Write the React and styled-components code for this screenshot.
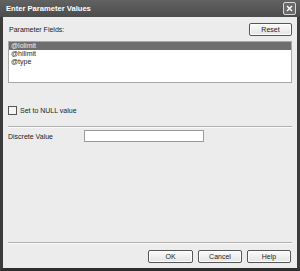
import styled, { createGlobalStyle } from "styled-components";

const Global = createGlobalStyle`
  html, body { margin: 0; padding: 0; background: #ececec; }
  body { font-family: "Liberation Sans", Arial, sans-serif; }
`;

const Window = styled.div`
  width: 300px;
  height: 271px;
  box-sizing: border-box;
  display: flex;
  flex-direction: column;
  background: #ececec;
  border-left: 3px solid #3c3c3c;
  border-right: 3px solid #3c3c3c;
  border-bottom: 3px solid #2e2e2e;
  font-size: 7px;
  color: #222;
`;

const TitleBar = styled.div`
  height: 17px;
  margin: 0 -3px;
  padding: 0 4px 0 6px;
  display: flex;
  align-items: center;
  justify-content: space-between;
  background: linear-gradient(#626262, #4c4c4c);
  color: #fff;
  font-weight: bold;
  font-size: 7.6px;
`;

const CloseBox = styled.div`
  width: 11px;
  height: 11px;
  border: 1px solid #d8d8d8;
  border-radius: 2px;
  background: #6a6a6a;
  display: flex;
  align-items: center;
  justify-content: center;
`;

const Body = styled.div`
  flex: 1;
  display: flex;
  flex-direction: column;
  padding: 6px 5px 0 5px;
`;

const HeaderRow = styled.div`
  display: flex;
  align-items: center;
  justify-content: space-between;
  padding-left: 1px;
`;

const Button = styled.button`
  width: ${(p) => p.w || 44}px;
  height: 13px;
  padding: 0;
  font: inherit;
  color: #222;
  background: linear-gradient(#fbfbfb, #e4e4e4);
  border: 1px solid #555;
  border-radius: 2px;
  box-shadow: inset 0 0 0 1px #fff;
`;

const List = styled.div`
  margin-top: 5px;
  height: 42px;
  background: #fff;
  border: 1px solid #a8a8a8;
  box-sizing: border-box;
`;

const ListItem = styled.div`
  height: 8px;
  line-height: 8px;
  padding-left: 2px;
  background: ${(p) => (p.selected ? "#6e6e6e" : "transparent")};
  color: ${(p) => (p.selected ? "#eee" : "#222")};
`;

const CheckRow = styled.label`
  margin-top: 23px;
  display: flex;
  align-items: center;
  gap: 3px;
`;

const CheckBox = styled.span`
  width: 7px;
  height: 7px;
  border: 1px solid #555;
  background: #f4f4f4;
`;

const Rule = styled.div`
  height: 0;
  border-top: 1px solid #b0b0b0;
  border-bottom: 1px solid #fafafa;
  margin-top: ${(p) => p.mt || 0}px;
`;

const FieldRow = styled.div`
  margin-top: 2px;
  display: flex;
  align-items: center;
`;

const FieldLabel = styled.span`
  width: 76px;
`;

const TextInput = styled.div`
  width: 120px;
  height: 12px;
  box-sizing: border-box;
  background: #fff;
  border: 1px solid #9a9a9a;
`;

const Spacer = styled.div`
  flex: 1;
`;

const Footer = styled.div`
  display: flex;
  justify-content: flex-end;
  gap: 5px;
  padding: 6px 1px 5px 0;
`;

export default function App() {
  return (
    <>
      <Global />
      <Window>
        <TitleBar>
          <span>Enter Parameter Values</span>
          <CloseBox>
            <svg width="7" height="7" viewBox="0 0 7 7">
              <path d="M1 1L6 6M6 1L1 6" stroke="#fff" strokeWidth="1.4" />
            </svg>
          </CloseBox>
        </TitleBar>
        <Body>
          <HeaderRow>
            <span>Parameter Fields:</span>
            <Button w={43}>Reset</Button>
          </HeaderRow>
          <List>
            <ListItem selected>@lolimit</ListItem>
            <ListItem>@hilimit</ListItem>
            <ListItem>@type</ListItem>
          </List>
          <CheckRow>
            <CheckBox />
            <span>Set to NULL value</span>
          </CheckRow>
          <Rule mt={11} />
          <FieldRow>
            <FieldLabel>Discrete Value</FieldLabel>
            <TextInput />
          </FieldRow>
          <Spacer />
          <Rule />
          <Footer>
            <Button w={45}>OK</Button>
            <Button w={44}>Cancel</Button>
            <Button w={44}>Help</Button>
          </Footer>
        </Body>
      </Window>
    </>
  );
}
